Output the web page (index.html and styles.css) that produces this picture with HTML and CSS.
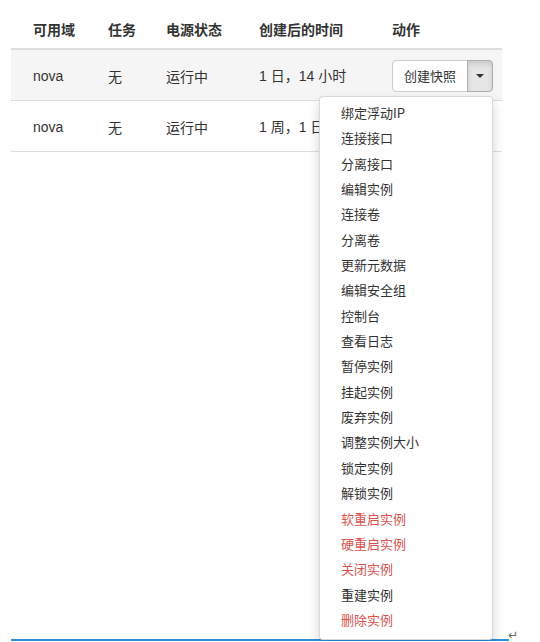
FILE: index.html
```html
<!DOCTYPE html>
<html lang="zh">
<head>
<meta charset="utf-8">
<link rel="stylesheet" href="styles.css">
</head>
<body>
<div class="page">
  <div class="table">
    <div class="row head">
      <div class="c1">可用域</div>
      <div class="c2">任务</div>
      <div class="c3">电源状态</div>
      <div class="c4">创建后的时间</div>
      <div class="c5">动作</div>
    </div>
    <div class="row odd">
      <div class="c1">nova</div>
      <div class="c2">无</div>
      <div class="c3">运行中</div>
      <div class="c4">1 日，14 小时</div>
      <div class="c5 actions">
        <div class="btn-group">
          <span class="btn">创建快照</span>
          <span class="btn caret-btn"><span class="caret"></span></span>
        </div>
        <ul class="menu">
          <li>绑定浮动IP</li>
          <li>连接接口</li>
          <li>分离接口</li>
          <li>编辑实例</li>
          <li>连接卷</li>
          <li>分离卷</li>
          <li>更新元数据</li>
          <li>编辑安全组</li>
          <li>控制台</li>
          <li>查看日志</li>
          <li>暂停实例</li>
          <li>挂起实例</li>
          <li>废弃实例</li>
          <li>调整实例大小</li>
          <li>锁定实例</li>
          <li>解锁实例</li>
          <li class="danger">软重启实例</li>
          <li class="danger">硬重启实例</li>
          <li class="danger">关闭实例</li>
          <li>重建实例</li>
          <li class="danger">删除实例</li>
        </ul>
      </div>
    </div>
    <div class="row">
      <div class="c1">nova</div>
      <div class="c2">无</div>
      <div class="c3">运行中</div>
      <div class="c4">1 周，1 日</div>
      <div class="c5 actions">
        <div class="btn-group">
          <span class="btn">创建快照</span>
          <span class="btn caret-btn plain"><span class="caret"></span></span>
        </div>
      </div>
    </div>
  </div>
  <div class="footer-line"><span class="ret">↵</span></div>
</div>
</body>
</html>
```
FILE: styles.css
```css
html, body {
  margin: 0;
  padding: 0;
  background: #fff;
}
body {
  font-family: "Noto Sans CJK SC", "Liberation Sans", sans-serif;
  color: #333;
  font-size: 14px;
}
.page {
  padding-left: 11px;
  width: 498px;
}
.table {
  width: 491px;
}
.row {
  display: grid;
  grid-template-columns: 75px 58px 93px 133px 1fr;
  padding-left: 22px;
  align-items: center;
  height: 50px;
  border-bottom: 1px solid #ddd;
  line-height: 20px;
}
.row > div {
  padding-top: 2px;
}
.row.head {
  height: 48px;
  border-bottom: 2px solid #ddd;
  align-items: end;
  font-weight: bold;
}
.row.head > div {
  padding-top: 0;
  padding-bottom: 9px;
}
.row.odd {
  background: #f5f5f5;
}
.c1, .c4 {
  font-family: "Liberation Sans", "Noto Sans CJK SC", sans-serif;
}
.row.head .c1, .row.head .c4 {
  font-family: "Noto Sans CJK SC", sans-serif;
}
.row > .actions {
  position: relative;
  height: 100%;
  padding-top: 0;
  display: flex;
  align-items: center;
}
.btn-group {
  display: flex;
  height: 32px;
  margin-top: 1px;
}
.btn {
  display: flex;
  align-items: center;
  justify-content: center;
  box-sizing: border-box;
  height: 32px;
  width: 76px;
  border: 1px solid #ccc;
  border-radius: 4px 0 0 4px;
  background: #fff;
  font-size: 13px;
  color: #333;
}
.caret-btn {
  width: 26px;
  margin-left: -1px;
  border-radius: 0 4px 4px 0;
  background: #e6e6e6;
  border-color: #adadad;
  box-shadow: inset 0 3px 5px rgba(0, 0, 0, 0.125);
}
.caret-btn.plain {
  background: #fff;
  border-color: #ccc;
  box-shadow: none;
}
.caret {
  width: 0;
  height: 0;
  border-top: 4px solid #333;
  border-left: 4px solid transparent;
  border-right: 4px solid transparent;
}
.menu {
  position: absolute;
  left: -73px;
  top: 46px;
  z-index: 10;
  width: 174px;
  box-sizing: border-box;
  margin: 0;
  padding: 4px 0 6px;
  list-style: none;
  background: #fff;
  border: 1px solid rgba(0, 0, 0, 0.15);
  border-radius: 4px;
  box-shadow: 0 6px 12px rgba(0, 0, 0, 0.175);
  font-size: 13px;
  font-weight: normal;
}
.menu li {
  padding: 2px 21px 4px;
  line-height: 19.35px;
  color: #333;
  white-space: nowrap;
}
.menu li.danger {
  color: #d9534f;
}
.footer-line {
  position: relative;
  margin-top: 487px;
  height: 0;
  border-top: 2px solid #2d8fd9;
}
.ret {
  position: absolute;
  left: 497px;
  top: -12px;
  font-size: 12px;
  line-height: 12px;
  color: #666;
  font-family: "DejaVu Sans", sans-serif;
}
```
